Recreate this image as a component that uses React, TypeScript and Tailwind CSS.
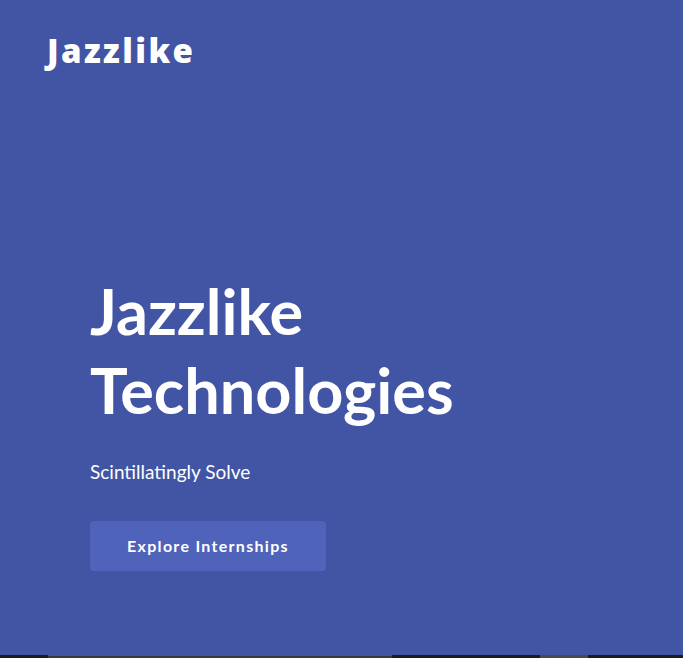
export default function App() {
  return (
    <div className="min-h-[658px] w-full bg-[#4155a4] flex flex-col">
      <header className="px-[47px] pt-[34px]">
        <span className="text-[33px] font-extrabold tracking-[2.4px] text-white font-['Open_Sans',sans-serif] leading-none">
          Jazzlike
        </span>
      </header>

      <section className="flex-1 pl-[90px] pt-[202px]">
        <h1 className="text-[63px] font-bold leading-[79px] text-white font-['Lato',sans-serif]">
          Jazzlike
          <br />
          Technologies
        </h1>
        <p className="mt-[33px] text-[19px] text-white font-['Lato',sans-serif] leading-none">
          Scintillatingly Solve
        </p>
        <button className="mt-[40px] w-[236px] h-[50px] rounded-[4px] bg-[#4e63b9] text-white text-[16px] font-bold tracking-[1.3px] font-['Lato',sans-serif]">
          Explore Internships
        </button>
      </section>

      <div className="flex h-[3px] mt-auto">
        <div className="w-[48px] bg-[#1c1b22]" />
        <div className="w-[344px] bg-[#3a3a3e] border-t border-[#5a5a5e]" />
        <div className="w-[148px] bg-[#1c1b22]" />
        <div className="w-[48px] bg-[#4a4a4e]" />
        <div className="flex-1 bg-[#1c1b22]" />
      </div>
    </div>
  );
}
